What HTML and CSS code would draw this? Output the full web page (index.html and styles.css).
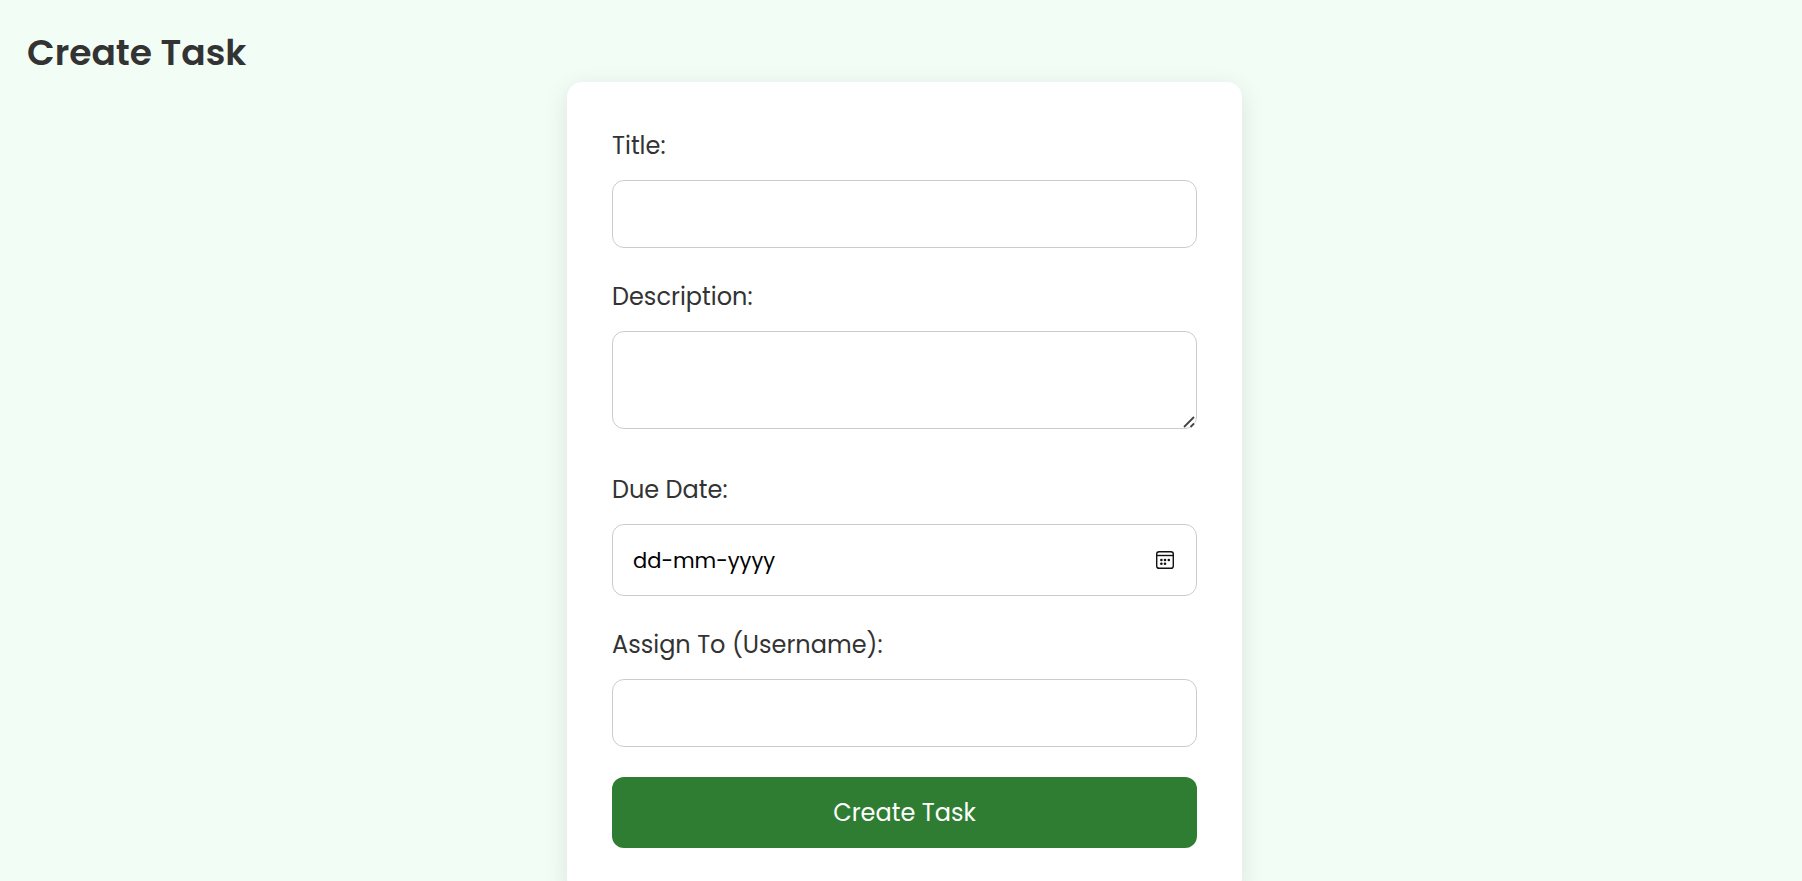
FILE: index.html
```html
<!DOCTYPE html>
<html lang="en">
<head>
  <meta charset="utf-8">
  <meta name="viewport" content="width=device-width, initial-scale=1">
  <title>Create Task</title>
  <link rel="stylesheet" href="styles.css">
</head>
<body>
  <h1 class="page-title">Create Task</h1>
  <form class="task-form">
    <div class="field">
      <label for="title">Title:</label>
      <input class="control" type="text" id="title" name="title">
    </div>
    <div class="field field-description">
      <label for="description">Description:</label>
      <div class="area-box">
        <textarea class="control control-area" id="description" name="description"></textarea>
        <svg class="grip" viewBox="0 0 12 12" aria-hidden="true">
          <path d="M1 11L11 1M7.5 11L11 7.5" fill="none" stroke="#444" stroke-width="1.8"/>
        </svg>
      </div>
    </div>
    <div class="field">
      <label for="due-date">Due Date:</label>
      <div class="control date-box">
        <input class="date-input" type="text" id="due-date" name="due_date" placeholder="dd-mm-yyyy">
        <button class="picker" type="button" aria-label="Show date picker">
          <svg class="picker-icon" viewBox="0 0 20 20" aria-hidden="true">
            <rect x="1.7" y="1.7" width="16.6" height="16.6" rx="2.4" fill="none" stroke="#111" stroke-width="1.4"/>
            <path d="M2 5.5H18" stroke="#111" stroke-width="1.4"/>
            <g fill="#111">
              <circle cx="6.4" cy="10" r="1.3"/>
              <circle cx="10" cy="10" r="1.3"/>
              <circle cx="13.8" cy="10" r="1.3"/>
              <circle cx="6.4" cy="13.8" r="1.3"/>
              <circle cx="10" cy="13.8" r="1.3"/>
            </g>
          </svg>
        </button>
      </div>
    </div>
    <div class="field">
      <label for="assignee">Assign To (Username):</label>
      <input class="control" type="text" id="assignee" name="assignee">
    </div>
    <button class="submit" type="submit">Create Task</button>
  </form>
</body>
</html>
```
FILE: styles.css
```css
*,
*::before,
*::after {
  box-sizing: border-box;
}

body {
  margin: 0;
  padding: 26px 20px 27px 27px;
  background: #f2fdf5;
  color: #333;
  font-family: Poppins, Inter, "Open Sans", sans-serif;
}

.page-title {
  margin: 0 0 2px;
  font-size: 36px;
  font-weight: 600;
  line-height: 54px;
}

.task-form {
  max-width: 675px;
  margin: 0 auto;
  padding: 45px;
  background: #fff;
  border-radius: 15px;
  box-shadow: 0 6px 24px rgba(0, 0, 0, 0.1);
}

.field {
  display: flex;
  flex-direction: column;
  gap: 15px;
  margin-bottom: 30px;
}

.field-description {
  margin-bottom: 42px;
}

.field label {
  font-size: 24px;
  font-weight: 400;
  line-height: 38px;
}

.control {
  width: 100%;
  height: 68px;
  padding: 18px 21px 18px 20px;
  border: 1px solid #ccc;
  border-radius: 12px;
  background: #fff;
  font-family: inherit;
  font-size: 21px;
}

.area-box {
  position: relative;
  display: flex;
}

.control-area {
  height: 98px;
  resize: vertical;
}

.control-area::-webkit-resizer {
  background: transparent;
}

.grip {
  position: absolute;
  right: 2px;
  bottom: 1px;
  width: 12px;
  height: 12px;
  pointer-events: none;
}

.date-box {
  display: flex;
  align-items: center;
  height: 72px;
}

.date-input {
  flex: 1;
  min-width: 0;
  padding: 0;
  border: 0;
  outline: 0;
  background: none;
  font-family: inherit;
  font-size: 21px;
  font-weight: 400;
}

.date-input::placeholder {
  color: #000;
  opacity: 1;
}

.picker {
  display: flex;
  padding: 0;
  border: 0;
  background: none;
}

.picker-icon {
  width: 20px;
  height: 20px;
}

.submit {
  width: 100%;
  height: 71px;
  border: 0;
  border-radius: 12px;
  background: #2e7d32;
  color: #fff;
  font-family: inherit;
  font-size: 24px;
  font-weight: 400;
}
```
